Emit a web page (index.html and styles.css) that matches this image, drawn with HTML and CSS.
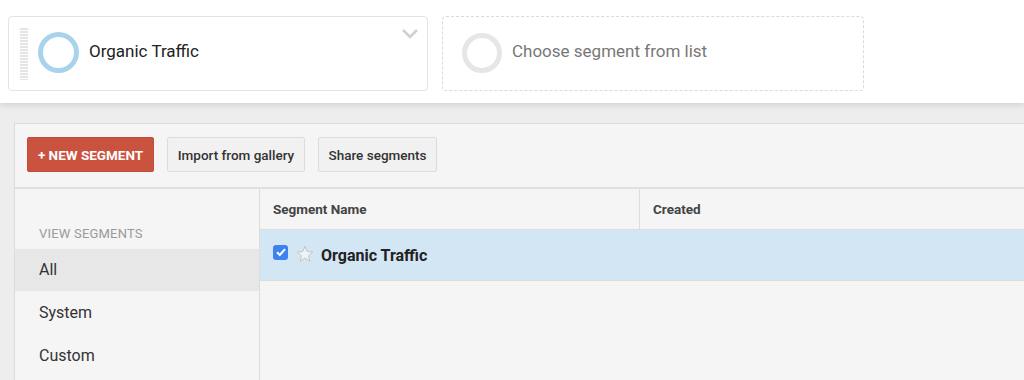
FILE: index.html
```html
<!DOCTYPE html>
<html lang="en">
<head>
    <meta charset="UTF-8">
    <meta name="viewport" content="width=device-width, initial-scale=1.0">
    <title>Segments</title>
    <link rel="stylesheet" href="styles.css">
</head>
<body>
    <div class="header">
        <div class="segment-card">
            <div class="drag-handle"></div>
            <span class="ring ring-blue"></span>
            <span class="segment-title">Organic Traffic</span>
            <svg class="chevron" width="18" height="12" viewBox="0 0 18 12">
                <path d="M2 2 L9 9 L16 2" fill="none" stroke="#d0d0d0" stroke-width="2.6"/>
            </svg>
        </div>
        <div class="segment-card empty">
            <span class="ring ring-grey"></span>
            <span class="segment-title placeholder">Choose segment from list</span>
        </div>
    </div>

    <div class="panel">
        <div class="toolbar">
            <button class="btn btn-red">+ NEW SEGMENT</button>
            <button class="btn">Import from gallery</button>
            <button class="btn">Share segments</button>
        </div>
        <div class="panel-body">
            <div class="sidebar">
                <div class="sidebar-label">VIEW SEGMENTS</div>
                <div class="sidebar-item active">All</div>
                <div class="sidebar-item">System</div>
                <div class="sidebar-item">Custom</div>
            </div>
            <div class="table">
                <div class="table-head">
                    <div class="col-name">Segment Name</div>
                    <div class="col-created">Created</div>
                </div>
                <div class="table-row selected">
                    <span class="checkbox">
                        <svg width="14" height="14" viewBox="0 0 14 14">
                            <path d="M3 7.2 L5.8 10 L11 4.2" fill="none" stroke="#fff" stroke-width="2"/>
                        </svg>
                    </span>
                    <svg class="star" width="20" height="20" viewBox="0 0 24 24">
                        <path d="M12 2.8 L14.7 9 L21.4 9.6 L16.3 14 L17.8 20.6 L12 17.1 L6.2 20.6 L7.7 14 L2.6 9.6 L9.3 9 Z" fill="#eef3f7" stroke="#c4c4c4" stroke-width="1.2" stroke-linejoin="round"/>
                    </svg>
                    <span class="row-title">Organic Traffic</span>
                </div>
            </div>
        </div>
    </div>
</body>
</html>
```

FILE: styles.css
```css
*,
*::before,
*::after{
    padding: 0;
    margin: 0;
    box-sizing: border-box;
}
html,
body{
    height: 380px;
    overflow: hidden;
}
body{
    background-color: #ededed;
    font-family: Roboto, "Liberation Sans", sans-serif;
    color: #222;
}
.header{
    height: 103px;
    background-color: #ffffff;
    box-shadow: 0 2px 6px rgba(0,0,0,0.12);
    padding: 16px 8px 0;
    display: flex;
    gap: 14px;
    position: relative;
}
.segment-card{
    width: 420px;
    height: 75px;
    border: 1px solid #e3e3e3;
    border-radius: 4px;
    display: flex;
    align-items: center;
    padding-left: 11px;
}
.segment-card.empty{
    width: 422px;
    border: 1px dashed #dadada;
    padding-left: 19px;
}
.drag-handle{
    width: 8px;
    height: 52px;
    margin-right: 10px;
    background: repeating-linear-gradient(to bottom, #e4e4e4 0, #e4e4e4 2px, transparent 2px, transparent 3px);
}
.ring{
    width: 41px;
    height: 41px;
    border-radius: 50%;
    margin-right: 10px;
    margin-top: -2px;
}
.ring-blue{
    border: 5px solid #a9d2ec;
}
.ring-grey{
    width: 40px;
    height: 40px;
    border: 5px solid #e6e6e6;
}
.segment-title{
    font-size: 17px;
    color: #222;
    margin-top: -6px;
}
.segment-title.placeholder{
    color: #777;
}
.chevron{
    margin-left: auto;
    margin-right: 8px;
    align-self: flex-start;
    margin-top: 11px;
}
.panel{
    margin: 20px 0 0 14px;
    background-color: #f5f5f5;
    border-top: 1px solid #dcdcdc;
    border-left: 1px solid #dcdcdc;
    height: 257px;
    display: flex;
    flex-direction: column;
}
.toolbar{
    display: flex;
    gap: 13px;
    padding: 13px 12px 15px;
    border-bottom: 2px solid #e0e0e0;
}
.btn{
    height: 35px;
    padding: 0 8px;
    font-family: Roboto, "Liberation Sans", sans-serif;
    font-size: 13.5px;
    font-weight: 500;
    color: #333;
    background-color: #f1f1f1;
    border: 1px solid #dcdcdc;
    border-radius: 2px;
}
.btn:nth-child(2){
    width: 138px;
}
.btn:nth-child(3){
    width: 119px;
}
.btn-red{
    width: 127px;
    background-color: #c9533f;
    border-color: #c24c39;
    color: #ffffff;
    font-weight: 700;
}
.panel-body{
    display: flex;
    flex: 1;
}
.sidebar{
    width: 245px;
    flex-shrink: 0;
    border-right: 1px solid #dcdcdc;
}
.sidebar-label{
    font-size: 13px;
    letter-spacing: 0.2px;
    color: #9a9a9a;
    padding: 37px 0 7px 24px;
    line-height: 16px;
}
.sidebar-item{
    height: 43px;
    line-height: 43px;
    padding-left: 24px;
    font-size: 16px;
    color: #333;
}
.sidebar-item.active{
    height: 42px;
    line-height: 42px;
    background-color: #e7e7e7;
}
.table{
    flex: 1;
}
.table-head{
    display: flex;
    height: 41px;
    border-bottom: 1px solid #dddddd;
    font-size: 13.5px;
    font-weight: 700;
    color: #444;
}
.col-name{
    width: 380px;
    border-right: 1px solid #dddddd;
    padding: 12px 13px;
}
.col-created{
    padding: 12px 13px;
}
.table-row{
    height: 51px;
    display: flex;
    align-items: center;
    padding-left: 13px;
    border-bottom: 1px solid #dddddd;
}
.table-row.selected{
    background-color: #d3e6f3;
}
.checkbox{
    width: 15px;
    height: 15px;
    border-radius: 3px;
    background-color: #3d82f0;
    display: grid;
    place-items: center;
    margin-top: -6px;
}
.star{
    margin-left: 7px;
    margin-right: 6px;
    margin-top: -2px;
}
.row-title{
    font-size: 16px;
    font-weight: 700;
    color: #222;
}
```
